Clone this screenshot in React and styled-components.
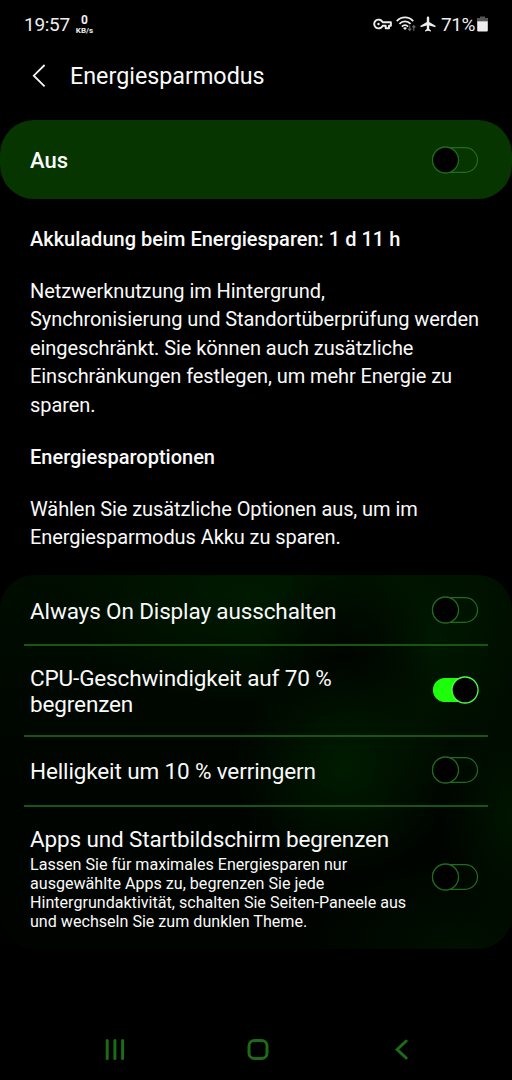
import React, { useState } from "react";
import styled, { createGlobalStyle } from "styled-components";

const options = [
  {
    id: "aod",
    title: "Always On Display ausschalten",
    height: 71,
    bottom: 0,
    on: false,
  },
  {
    id: "cpu",
    title: "CPU-Geschwindigkeit auf 70 % begrenzen",
    height: 91,
    bottom: 1,
    on: true,
  },
  {
    id: "light",
    title: "Helligkeit um 10 % verringern",
    height: 70,
    bottom: 2,
    on: false,
  },
  {
    id: "apps",
    title: "Apps und Startbildschirm begrenzen",
    text: "Lassen Sie für maximales Energiesparen nur ausgewählte Apps zu, begrenzen Sie jede Hintergrundaktivität, schalten Sie Seiten-Paneele aus und wechseln Sie zum dunklen Theme.",
    height: 140,
    bottom: 0,
    on: false,
  },
];

function Switch({ on, onClick }) {
  return (
    <SwitchButton type="button" role="switch" aria-checked={on} onClick={onClick}>
      <svg width="48" height="28" viewBox="0 0 48 28">
        <rect
          x={on ? 2.5 : 1.5}
          y={on ? 2.5 : 1.7}
          width={on ? 43 : 45}
          height={on ? 23 : 24.6}
          rx={on ? 11.5 : 12.3}
          fill={on ? "#1dff0a" : "none"}
          stroke={on ? "#1dff0a" : "#206b1e"}
          strokeWidth="1.2"
        />
        <circle
          cx={on ? 34 : 14.5}
          cy="14"
          r="13"
          fill="#000"
          stroke={on ? "#4cff45" : "#206b1e"}
          strokeWidth="1.3"
        />
      </svg>
    </SwitchButton>
  );
}

function App() {
  const [active, setActive] = useState(false);
  const [items, setItems] = useState(options);

  const toggle = (id) => {
    setItems(items.map((el) => (el.id === id ? { ...el, on: !el.on } : el)));
  };

  return (
    <Screen>
      <GlobalStyle />
      <StatusBar>
        <Clock>19:57</Clock>
        <Speed>
          <SpeedValue>0</SpeedValue>
          <SpeedUnit>KB/s</SpeedUnit>
        </Speed>
        <StatusIcons>
          {/* vpn key */}
          <svg width="19" height="12" viewBox="0 0 19 12" fill="none" stroke="#eee" strokeWidth="1.9">
            <path d="M9.6 4.2A4.4 4.4 0 1 0 9.6 7.8H12.7V10.2H16V7.8H17.9V4.2Z" strokeLinejoin="round" />
            <circle cx="5.5" cy="6" r="1.2" fill="#eee" stroke="none" />
          </svg>
          {/* wifi */}
          <svg width="20" height="16" viewBox="0 0 20 16" fill="none">
            <g stroke="#eee" strokeWidth="1.8">
              <path d="M0.8 5.1C5.2 0.2 12.8 0.2 17.2 5.1" />
              <path d="M3.4 7.9C6.5 4.6 11.5 4.6 14.6 7.9" />
              <path d="M5.9 10.6C7.7 8.8 10.3 8.8 12.1 10.6" />
            </g>
            <path d="M7 12L9 11L11 12L9 14Z" fill="#eee" />
            <path d="M13.7 9.4V14.4M12.1 12.7L13.7 14.5L15.3 12.7M17.8 14.7V9.7M16.3 11.4L17.8 9.7L19.4 11.4" stroke="#666" strokeWidth="1.2" />
          </svg>
          {/* airplane */}
          <svg width="16" height="16" viewBox="0 0 16 16">
            <path
              d="M8 0.5C8.8 0.5 9.2 1.2 9.2 2V6L15.5 9.8V11.3L9.2 9.4V13L11 14.4V15.5L8 14.7L5 15.5V14.4L6.8 13V9.4L0.5 11.3V9.8L6.8 6V2C6.8 1.2 7.2 0.5 8 0.5Z"
              fill="#eee"
            />
          </svg>
        </StatusIcons>
        <Percent>71%</Percent>
        <svg width="11" height="16" viewBox="0 0 11 16">
          <path d="M3 0.4H8V2H11V5.5H0V2H3Z" fill="#555" />
          <path d="M0.2 5.3H10.8V14.5Q10.8 15.5 9.8 15.5H1.2Q0.2 15.5 0.2 14.5Z" fill="#eee" />
        </svg>
      </StatusBar>
      <Header>
        <svg width="14" height="24" viewBox="0 0 14 24" fill="none">
          <path d="M12.6 1L1.8 11.7L12.6 22.4" stroke="#f5f5f5" strokeWidth="1.8" />
        </svg>
        <HeaderTitle>Energiesparmodus</HeaderTitle>
      </Header>
      <MainSwitch>
        <MainLabel>Aus</MainLabel>
        <Switch on={active} onClick={() => setActive(!active)} />
      </MainSwitch>
      <Info>
        <Subtitle>Akkuladung beim Energiesparen: 1 d 11 h</Subtitle>
        <Text>
          Netzwerknutzung im Hintergrund, Synchronisierung und
          Standortüberprüfung werden eingeschränkt. Sie können auch zusätzliche
          Einschränkungen festlegen, um mehr Energie zu sparen.
        </Text>
        <Subtitle>Energiesparoptionen</Subtitle>
        <Text>
          Wählen Sie zusätzliche Optionen aus, um im Energiesparmodus Akku zu
          sparen.
        </Text>
      </Info>
      <Options>
        {items.map((el) => (
          <Option key={el.id} $height={el.height} $bottom={el.bottom}>
            <OptionBody $wide={Boolean(el.text)}>
              <OptionTitle>{el.title}</OptionTitle>
              {el.text && <OptionText>{el.text}</OptionText>}
            </OptionBody>
            <Switch on={el.on} onClick={() => toggle(el.id)} />
          </Option>
        ))}
      </Options>
      <NavBar>
        <NavButton type="button" aria-label="Letzte Apps">
          <svg width="22" height="24" viewBox="0 0 22 24">
            <path d="M3.2 3.5V21.5M10.9 3.5V21.5M18.6 3.5V21.5" stroke="#1d6a17" strokeWidth="3" strokeLinecap="round" />
          </svg>
        </NavButton>
        <NavButton type="button" aria-label="Startseite">
          <svg width="24" height="24" viewBox="0 0 24 24" fill="none">
            <rect x="3" y="3.5" width="18" height="18" rx="5.5" stroke="#1d6a17" strokeWidth="3" />
          </svg>
        </NavButton>
        <NavButton type="button" aria-label="Zurück">
          <svg width="24" height="24" viewBox="0 0 24 24" fill="none">
            <path d="M17.2 4L8.2 12.5L17.2 21" stroke="#1d6a17" strokeWidth="3" strokeLinecap="round" />
          </svg>
        </NavButton>
      </NavBar>
    </Screen>
  );
}

export default App;

const GlobalStyle = createGlobalStyle`
  * {
    box-sizing: border-box;
  }
  body {
    margin: 0;
    background-color: #000;
    font-family: Roboto, "Liberation Sans", sans-serif;
    color: #fafafa;
  }
  h1, h2, h3, p {
    margin: 0;
  }
  button {
    padding: 0;
    border: none;
    background: none;
  }
  svg {
    display: block;
    flex-shrink: 0;
  }
`;

const Screen = styled.div`
  display: flex;
  flex-direction: column;
  width: 512px;
  height: 1080px;
  background-color: #000;
`;

const StatusBar = styled.div`
  display: flex;
  align-items: center;
  height: 48px;
  padding: 0 24px;
  color: #eee;
`;

const Clock = styled.span`
  padding-top: 2px;
  font-size: 19px;
  line-height: 24px;
  letter-spacing: -0.3px;
`;

const Speed = styled.div`
  display: flex;
  flex-direction: column;
  align-items: center;
  margin-left: 6px;
  padding-top: 1px;
  font-weight: 700;
`;

const SpeedValue = styled.span`
  font-size: 12px;
  line-height: 11px;
`;

const SpeedUnit = styled.span`
  font-size: 8px;
  line-height: 9px;
`;

const StatusIcons = styled.div`
  display: flex;
  align-items: center;
  gap: 4px;
  margin-left: auto;
`;

const Percent = styled.span`
  margin: 0 2px 0 5px;
  padding-top: 2px;
  font-size: 19px;
  line-height: 24px;
  letter-spacing: -0.4px;
`;

const Header = styled.header`
  display: flex;
  align-items: center;
  gap: 24px;
  height: 56px;
  padding-left: 32px;
`;

const HeaderTitle = styled.h1`
  font-size: 23.3px;
  font-weight: 400;
  line-height: 28px;
`;

const MainSwitch = styled.div`
  display: flex;
  align-items: center;
  justify-content: space-between;
  height: 79px;
  margin-top: 16px;
  padding: 0 33px 0 30px;
  border-radius: 34px;
  background-color: #063500;
`;

const MainLabel = styled.h2`
  padding-top: 2px;
  font-size: 22px;
  font-weight: 500;
  line-height: 28px;
`;

const SwitchButton = styled.button`
  flex-shrink: 0;
  width: 48px;
  height: 28px;
`;

const Info = styled.section`
  height: 376px;
  padding: 26px 31px 0 30px;
`;

const Subtitle = styled.h3`
  font-size: 20px;
  font-weight: 500;
  line-height: 28px;
`;

const Text = styled.p`
  margin: 24px 0;
  font-size: 20px;
  line-height: 28.4px;
  letter-spacing: -0.08px;
`;

const Options = styled.section`
  height: 374px;
  border-radius: 34px;
  background: radial-gradient(circle 110px at 345px 190px, #001c00, transparent),
    radial-gradient(ellipse 90px 110px at 345px 90px, #000300, transparent),
    radial-gradient(ellipse 190px 110px at 250px 20px, #001a00, transparent),
    radial-gradient(ellipse 120px 150px at 430px 70px, #001800, transparent),
    radial-gradient(ellipse 70px 120px at 512px 240px, #001500, transparent),
    radial-gradient(ellipse 160px 90px at 460px 374px, #001000, transparent),
    linear-gradient(#000d00, #000500 45%, #000300);
`;

const Option = styled.div`
  display: flex;
  align-items: center;
  justify-content: space-between;
  height: ${(props) => props.$height}px;
  margin: 0 24px;
  padding: 0 9px ${(props) => props.$bottom}px 6px;
  border-bottom: 2px solid #185513;

  &:last-child {
    border-bottom: none;
  }
`;

const OptionBody = styled.div`
  width: 382px;
  padding-top: ${(props) => (props.$wide ? 3 : 2)}px;
`;

const OptionTitle = styled.h3`
  max-width: 365px;
  font-size: 22.5px;
  font-weight: 400;
  line-height: 26px;
  letter-spacing: -0.13px;
`;

const OptionText = styled.p`
  margin-top: 3px;
  font-size: 16.1px;
  line-height: 19px;
`;

const NavBar = styled.nav`
  display: flex;
  justify-content: space-between;
  align-items: center;
  height: 62px;
  margin-top: auto;
  padding: 0 94px 0 98px;
`;

const NavButton = styled.button`
  display: flex;
  justify-content: center;
  width: 34px;
`;
